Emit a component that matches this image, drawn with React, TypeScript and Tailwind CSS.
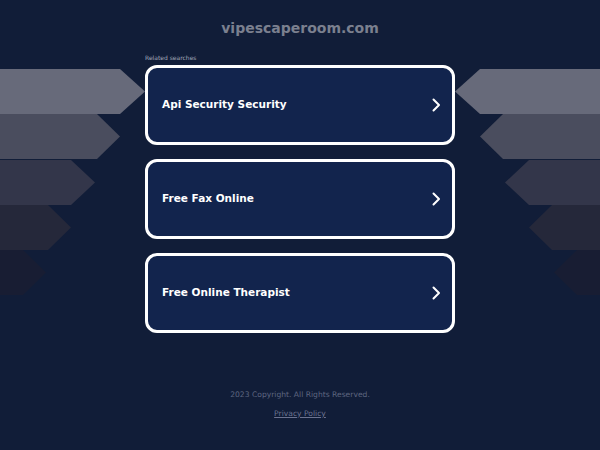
import React from "react";

const searches = ["Api Security Security", "Free Fax Online", "Free Online Therapist"];

const bands = [
  { y: 69, rect: 120, tip: 145, fill: "#676a7a" },
  { y: 114, rect: 97, tip: 120, fill: "#4a4d5e" },
  { y: 160, rect: 71, tip: 95, fill: "#33364a" },
  { y: 205, rect: 48, tip: 71, fill: "#25283a" },
  { y: 250, rect: 23, tip: 46, fill: "#181d33" },
];

const Backdrop = () => (
  <svg className="absolute inset-0" width="600" height="450" viewBox="0 0 600 450">
    {bands.map((b) => {
      const h = 45;
      const left = `0,${b.y} ${b.rect},${b.y} ${b.tip},${b.y + h / 2} ${b.rect},${b.y + h} 0,${b.y + h}`;
      const right = `600,${b.y} ${600 - b.rect},${b.y} ${600 - b.tip},${b.y + h / 2} ${600 - b.rect},${b.y + h} 600,${b.y + h}`;
      return (
        <g key={b.y} fill={b.fill}>
          <polygon points={left} />
          <polygon points={right} />
        </g>
      );
    })}
  </svg>
);

const Chevron = () => (
  <svg width="10" height="14" viewBox="0 0 10 14" fill="none">
    <path d="M2.5 1.5 L8 7 L2.5 12.5" stroke="white" strokeWidth="2" strokeLinecap="round" strokeLinejoin="round" />
  </svg>
);

export default function App() {
  return (
    <div
      className="relative h-[450px] w-[600px] overflow-hidden bg-[#111d38]"
      style={{ fontFamily: '"DejaVu Sans", sans-serif' }}
    >
      <Backdrop />
      <div className="relative flex flex-col items-center">
        <h1 className="mt-[18px] text-[14px] font-bold leading-5 text-[#7b808f]">vipescaperoom.com</h1>
        <div className="mt-[15px] w-[310px]">
          <div className="text-[6px] leading-[10px] text-[#a2a8b8]">Related searches</div>
          <div className="mt-[2px] flex flex-col gap-[14px]">
            {searches.map((s) => (
              <div
                key={s}
                className="flex h-[80px] items-center justify-between rounded-[12px] border-[3px] border-white bg-[#12244d] pl-[14px] pr-[11px]"
              >
                <span className="text-[10.5px] font-bold text-white">{s}</span>
                <Chevron />
              </div>
            ))}
          </div>
        </div>
        <div className="mt-[56px] text-[7.6px] leading-3 text-[#5e6680]">2023 Copyright. All Rights Reserved.</div>
        <a className="mt-[7px] text-[7.6px] leading-3 text-[#6c7390] underline">Privacy Policy </a>
      </div>
    </div>
  );
}
